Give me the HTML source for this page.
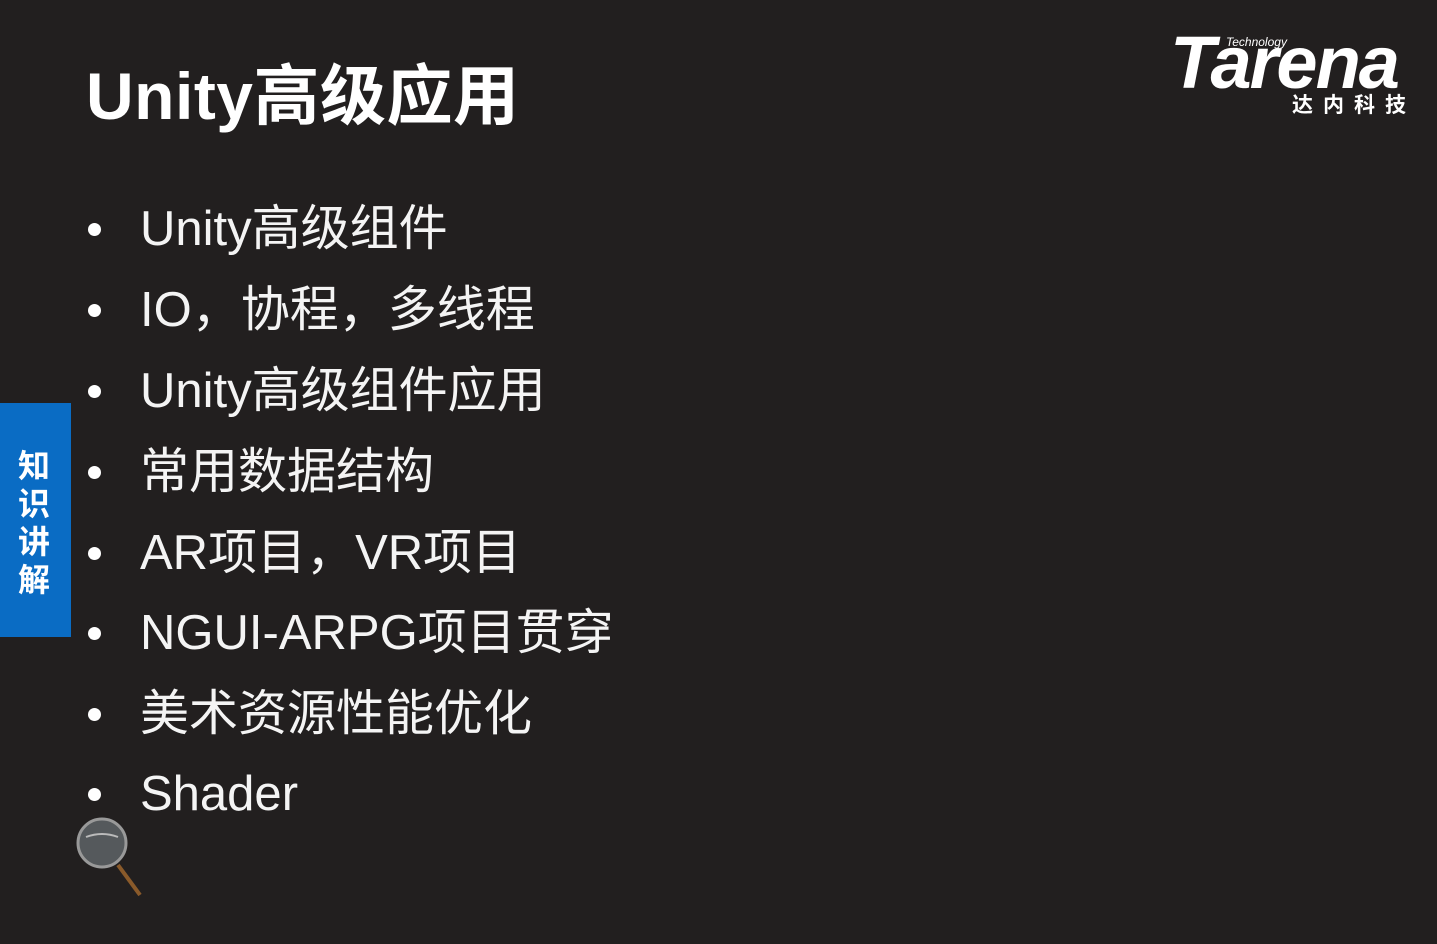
<!DOCTYPE html>
<html><head><meta charset="utf-8"><style>
html,body{margin:0;padding:0}
body{width:1437px;height:944px;background:#221f1f;position:relative;overflow:hidden;font-family:"Liberation Sans","Noto Sans CJK SC",sans-serif;color:#fff}
.t{position:absolute;left:86px;top:56px;font-size:66px;font-weight:bold;line-height:80px;white-space:nowrap;letter-spacing:0.5px}
.li{position:absolute;left:140px;font-size:49px;line-height:60px;white-space:nowrap;color:#f4f4f4}
.b{position:absolute;left:88px;width:13px;height:13px;border-radius:50%;background:#fff}
.side{position:absolute;left:0;top:403px;width:71px;height:234px;background:#0a6cc4;}
.side span{position:absolute;left:18px;font-size:32px;font-weight:bold;line-height:38px;color:#fff}
.logo{position:absolute;left:1170px;top:26px;font-size:74px;font-weight:bold;font-style:italic;letter-spacing:-2px;line-height:74px}
</style></head><body>
<div class="t">Unity高级应用</div>
<div class="logo">Tarena</div>
<div style="position:absolute;left:1226px;top:35px;font-size:12px;color:#fff;font-style:italic">Technology</div>
<div style="position:absolute;left:1292px;top:93px;font-size:21px;font-weight:bold;letter-spacing:10px;line-height:26px">达内科技</div>
<div class="side"><span style="top:44px">知</span><span style="top:82px">识</span><span style="top:120px">讲</span><span style="top:158px">解</span></div>
<div class="b" style="top:223px"></div><div class="li" style="top:199px">Unity高级组件</div>
<div class="b" style="top:304px"></div><div class="li" style="top:280px">IO，协程，多线程</div>
<div class="b" style="top:385px"></div><div class="li" style="top:361px">Unity高级组件应用</div>
<div class="b" style="top:466px"></div><div class="li" style="top:442px">常用数据结构</div>
<div class="b" style="top:547px"></div><div class="li" style="top:523px">AR项目，VR项目</div>
<div class="b" style="top:627px"></div><div class="li" style="top:603px">NGUI-ARPG项目贯穿</div>
<div class="b" style="top:708px"></div><div class="li" style="top:684px">美术资源性能优化</div>
<div class="b" style="top:788px"></div><div class="li" style="top:764px">Shader</div>
<svg style="position:absolute;left:74px;top:815px" width="72" height="85"><line x1="44" y1="50" x2="66" y2="80" stroke="#8a5a2a" stroke-width="4"/><circle cx="28" cy="28" r="24" fill="#55595c" stroke="#999" stroke-width="3"/><path d="M12 22 Q28 16 44 22" stroke="#bbb" stroke-width="2" fill="none"/></svg>
</body></html>
